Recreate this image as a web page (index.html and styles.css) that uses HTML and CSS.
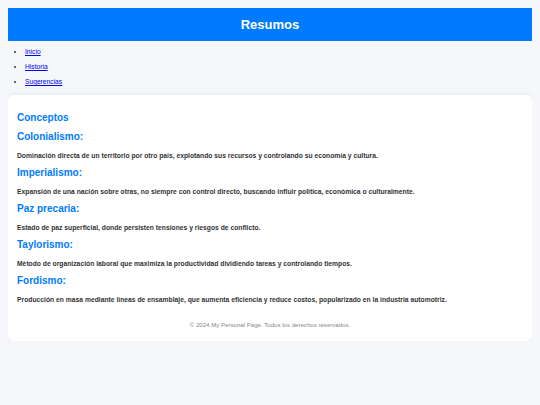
FILE: index.html
```html
<!DOCTYPE html>
<html lang="es">
<head>
<meta charset="utf-8">
<title>Resumos</title>
<link rel="stylesheet" href="styles.css">
</head>
<body>
<header class="site-header">
  <h1 class="site-title">Resumos</h1>
</header>
<nav class="site-nav">
  <ul class="nav-list">
    <li><a href="#">Inicio</a></li>
    <li><a href="#">Historia</a></li>
    <li><a href="#">Sugerencias</a></li>
  </ul>
</nav>
<main class="card">
  <h2 class="card-title">Conceptos</h2>
  <h3 class="term">Colonialismo:</h3>
  <p class="desc">Dominación directa de un territorio por otro país, explotando sus recursos y controlando su economía y cultura.</p>
  <h3 class="term">Imperialismo:</h3>
  <p class="desc">Expansión de una nación sobre otras, no siempre con control directo, buscando influir política, económica o culturalmente.</p>
  <h3 class="term">Paz precaria:</h3>
  <p class="desc">Estado de paz superficial, donde persisten tensiones y riesgos de conflicto.</p>
  <h3 class="term">Taylorismo:</h3>
  <p class="desc">Método de organización laboral que maximiza la productividad dividiendo tareas y controlando tiempos.</p>
  <h3 class="term">Fordismo:</h3>
  <p class="desc">Producción en masa mediante líneas de ensamblaje, que aumenta eficiencia y reduce costos, popularizado en la industria automotriz.</p>
  <footer class="card-footer">© 2024 My Personal Page. Todos los derechos reservados.</footer>
</main>
</body>
</html>
```

FILE: styles.css
```css
html, body {
  background: #f5f7fa;
}
body {
  margin: 8px;
  font-family: "Liberation Sans", Arial, sans-serif;
  color: #333;
}
.site-header {
  background: #007bff;
  height: 33px;
  display: flex;
  align-items: center;
  justify-content: center;
}
.site-title {
  margin: 0;
  color: #fff;
  font-size: 13px;
  line-height: 16px;
  font-weight: bold;
}
.site-nav {
  padding: 6px 0 3px;
}
.nav-list {
  margin: 0;
  padding-left: 17px;
  font-size: 6.7px;
  line-height: 9px;
}
.nav-list li {
  margin-bottom: 6px;
}
.nav-list li:last-child {
  margin-bottom: 0;
}
.nav-list a {
  color: #0000ee;
}
.card {
  display: block;
  margin-top: 6px;
  background: #fff;
  border-radius: 5px;
  box-shadow: 0 1px 6px rgba(0, 0, 0, 0.1);
  padding: 17px 9px 12px;
}
.card-title {
  margin: 0;
  color: #007bff;
  font-size: 10px;
  line-height: 12px;
  font-weight: bold;
}
.term {
  margin: 7px 0 9px;
  color: #007bff;
  font-size: 10px;
  line-height: 12px;
  font-weight: bold;
}
.desc {
  margin: 0;
  font-size: 6.75px;
  line-height: 8px;
  font-weight: bold;
  color: #333;
}
.card-footer {
  margin-top: 17px;
  text-align: center;
  font-size: 6.1px;
  line-height: 8px;
  color: #888;
}
```
